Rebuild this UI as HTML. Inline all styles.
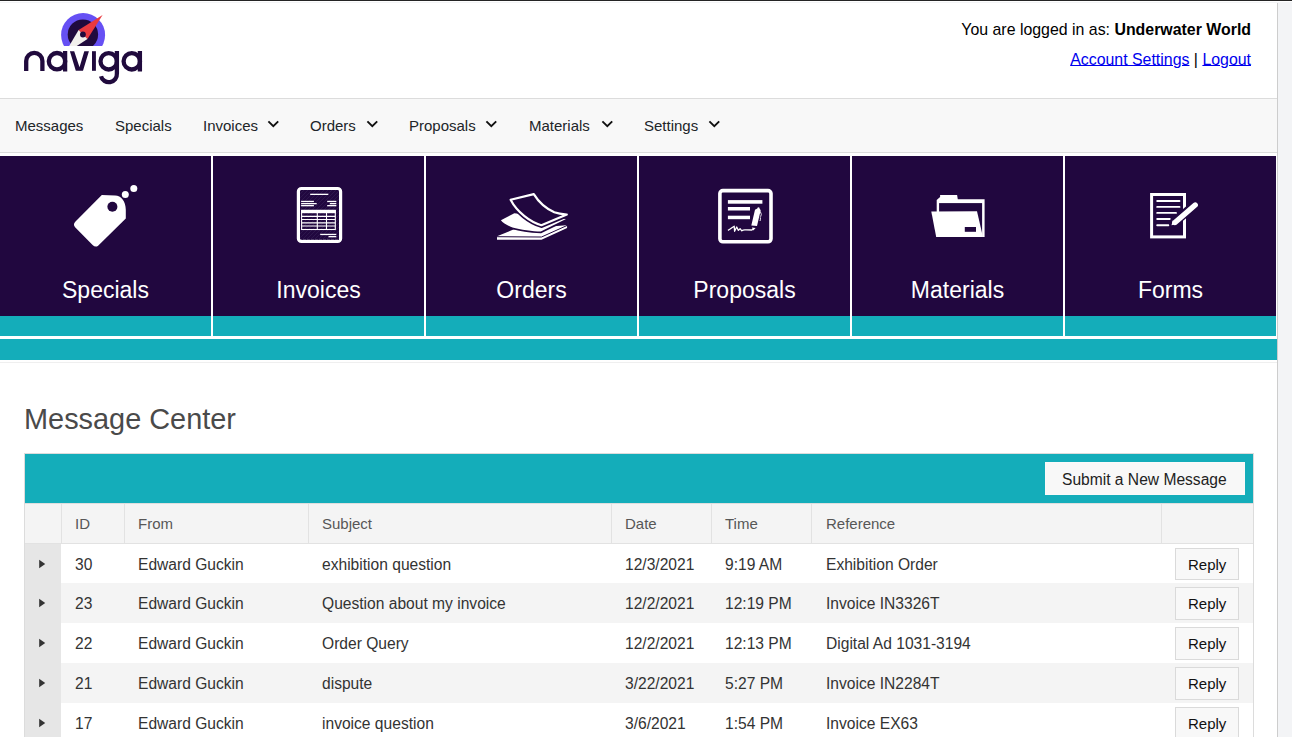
<!DOCTYPE html>
<html><head><meta charset="utf-8">
<style>
html,body{margin:0;padding:0;background:#fff;}
body{width:1292px;height:737px;overflow:hidden;position:relative;font-family:"Liberation Sans",sans-serif;}
.a{position:absolute;}
.t{position:absolute;white-space:nowrap;line-height:1;}
.topline{left:0;top:0;width:1292px;height:1px;background:#242424;}
.topline2{left:0;top:2px;width:1292px;height:1px;background:#f3f4f6;}
.sbborder{left:1277px;top:3px;width:1px;height:734px;background:#cdcdcd;}
.sb{left:1278px;top:3px;width:14px;height:734px;background:#f3f4f6;}
.nav{left:0;top:98px;width:1277px;height:53px;background:#f8f8f8;border-top:1px solid #dcdcdc;border-bottom:1px solid #dcdcdc;}
.nv{font-size:15px;color:#212529;top:118px;}
.chev{position:absolute;top:120px;width:11px;height:8px;overflow:visible}
.tile{top:156px;width:211px;height:160px;background:#21073f;}
.tteal{top:316px;width:211px;height:20px;background:#14adba;}
.tl{top:279px;font-size:23px;color:#fff;width:211px;text-align:center;}
.bar{left:0;top:339px;width:1277px;height:21px;background:#14adba;}
.hr{left:0;top:362px;width:1277px;height:1px;background:#efefef;}
.h1{left:24px;top:405px;font-size:28.9px;color:#4a4a4a;}
.grid{left:24px;top:453px;width:1228px;height:300px;border:1px solid #dcdcdc;border-bottom:none;}
.tool{left:25px;top:454px;width:1228px;height:49px;background:#14adba;}
.tbb{left:25px;top:503px;width:1228px;height:1px;background:#dedede;}
.hdr{left:25px;top:504px;width:1228px;height:39px;background:#f4f4f4;}
.vb{position:absolute;top:504px;width:1px;height:39px;background:#e2e2e2;}
.hb{left:25px;top:543px;width:1228px;height:1px;background:#e2e2e2;}
.ht{font-size:15px;color:#575757;top:516px;}
.row{position:absolute;left:25px;width:1228px;height:40px;}
.alt{background:#f4f4f4;}
.exp{position:absolute;left:25px;width:36px;background:#e6e6e6;}
.ct{font-size:15.6px;color:#333;}
.btn{position:absolute;background:#f8f8f8;border:1px solid #dadada;box-sizing:border-box;}
</style></head><body>
<div class="a topline"></div>
<div class="a topline2"></div>
<div class="a sb"></div>
<div class="a sbborder"></div>

<!-- LOGO -->
<svg class="a" style="left:0;top:0" width="160" height="95" viewBox="0 0 160 95">
  <defs><clipPath id="cut"><rect x="0" y="0" width="160" height="46"/></clipPath></defs>
  <g clip-path="url(#cut)">
    <circle cx="83.1" cy="35" r="22" fill="#6650f4"/>
    <circle cx="82.9" cy="34.6" r="15.2" fill="#200a3d"/>
    <polygon points="102.6,15.1 87.5,39.05 78.6,29.9" fill="#e9393f"/>
    <polygon points="78.6,29.9 87.5,39.05 76.6,46.1 69.1,46.1" fill="#f2f0ec"/>
    <circle cx="82.9" cy="34.5" r="2.9" fill="#200a3d"/>
  </g>
  <g fill="none" stroke="#200a3d" stroke-width="4.3">
    <path d="M26.2,71 V61 A8.1,8.1 0 0 1 42.4,61 V71"/>
    <circle cx="57" cy="61.2" r="8.2"/>
    <path d="M65.1,51 V71.5"/>
    <circle cx="108.7" cy="61.3" r="8.2"/>
    <path d="M116.9,51 V73.5 A8.1,8.1 0 0 1 101,76.2"/>
    <circle cx="131.8" cy="61.3" r="8.2"/>
    <path d="M139.9,51 V71.5"/>
  </g>
  <polygon fill="#200a3d" points="69.9,51.2 74.2,51.2 79.5,67.3 84.3,51.2 88.9,51.2 83,70.8 75.8,70.8"/>
  <rect x="92" y="51.2" width="3.9" height="19.6" fill="#200a3d"/>
</svg>

<!-- USER INFO -->
<div class="t" style="right:41px;top:22px;font-size:15.9px;color:#000;">You are logged in as: <b>Underwater World</b></div>
<div class="t" style="right:41px;top:52px;font-size:15.9px;color:#000;"><span style="color:#0000ee;text-decoration:underline;text-underline-offset:0px">Account Settings</span> | <span style="color:#0000ee;text-decoration:underline;text-underline-offset:0px">Logout</span></div>

<!-- NAV -->
<div class="a nav"></div>
<div class="t nv" style="left:15px">Messages</div>
<div class="t nv" style="left:115px">Specials</div>
<div class="t nv" style="left:203px">Invoices</div>
<div class="t nv" style="left:310px">Orders</div>
<div class="t nv" style="left:409px">Proposals</div>
<div class="t nv" style="left:529px">Materials</div>
<div class="t nv" style="left:644px">Settings</div>
<svg class="chev" style="left:268px" viewBox="0 0 11 8"><path d="M0.4,1.4 L5.3,6.2 L10.2,1.4" fill="none" stroke="#111" stroke-width="1.9"/></svg>
<svg class="chev" style="left:367px" viewBox="0 0 11 8"><path d="M0.4,1.4 L5.3,6.2 L10.2,1.4" fill="none" stroke="#111" stroke-width="1.9"/></svg>
<svg class="chev" style="left:486px" viewBox="0 0 11 8"><path d="M0.4,1.4 L5.3,6.2 L10.2,1.4" fill="none" stroke="#111" stroke-width="1.9"/></svg>
<svg class="chev" style="left:602px" viewBox="0 0 11 8"><path d="M0.4,1.4 L5.3,6.2 L10.2,1.4" fill="none" stroke="#111" stroke-width="1.9"/></svg>
<svg class="chev" style="left:709px" viewBox="0 0 11 8"><path d="M0.4,1.4 L5.3,6.2 L10.2,1.4" fill="none" stroke="#111" stroke-width="1.9"/></svg>

<!-- TILES -->
<div class="a tile" style="left:0"></div><div class="a tteal" style="left:0"></div>
<div class="a tile" style="left:213px"></div><div class="a tteal" style="left:213px"></div>
<div class="a tile" style="left:426px"></div><div class="a tteal" style="left:426px"></div>
<div class="a tile" style="left:639px"></div><div class="a tteal" style="left:639px"></div>
<div class="a tile" style="left:852px"></div><div class="a tteal" style="left:852px"></div>
<div class="a tile" style="left:1065px"></div><div class="a tteal" style="left:1065px"></div>
<div class="t tl" style="left:0">Specials</div>
<div class="t tl" style="left:213px">Invoices</div>
<div class="t tl" style="left:426px">Orders</div>
<div class="t tl" style="left:639px">Proposals</div>
<div class="t tl" style="left:852px">Materials</div>
<div class="t tl" style="left:1065px">Forms</div>
<div class="a bar"></div>
<div class="a hr"></div>

<!-- ICONS placeholder -->
<svg id="icons" class="a" style="left:0;top:0" width="1277" height="300" viewBox="0 0 1277 300">
 <!-- Specials: tag -->
 <g fill="#fff">
  <path d="M101.8,195.1 L115.2,195.4 C121,195.6 125.8,201 125.8,209.7 L125.8,218.4 L98.1,245.7 Q95.4,247.8 92.6,244.9 L75.1,227.2 Q72.6,224.4 75.5,221.5 Z"/>
  <circle cx="125.3" cy="194.5" r="3.5"/>
  <circle cx="133.8" cy="188.5" r="3.5"/>
 </g>
 <circle cx="112.4" cy="206.7" r="5" fill="#21073f"/>

 <!-- Invoices -->
 <rect x="298.4" y="188.5" width="42.2" height="52.9" rx="3" ry="3" fill="none" stroke="#fff" stroke-width="3.2"/>
 <defs><clipPath id="invclip"><rect x="300" y="190" width="39" height="50"/></clipPath></defs><g clip-path="url(#invclip)" stroke="#2f1a4e" stroke-width="0.9"><path d="M250,240 L300,190 M254,240 L304,190 M258,240 L308,190 M262,240 L312,190 M266,240 L316,190 M270,240 L320,190 M274,240 L324,190 M278,240 L328,190 M282,240 L332,190 M286,240 L336,190 M290,240 L340,190 M294,240 L344,190 M298,240 L348,190 M302,240 L352,190 M306,240 L356,190 M310,240 L360,190 M314,240 L364,190 M318,240 L368,190 M322,240 L372,190 M326,240 L376,190 M330,240 L380,190 M334,240 L384,190 M338,240 L388,190"/></g>
 <g fill="#fff">
  <rect x="310.2" y="193.7" width="18.1" height="1.3"/>
  <rect x="301.1" y="200.8" width="12.8" height="1.3"/>
  <rect x="301.1" y="203" width="15.6" height="1.3"/>
  <rect x="301.1" y="205" width="12.8" height="1.3"/>
  <rect x="327.2" y="200.8" width="9.1" height="1.3"/>
  <rect x="329.8" y="203" width="6.5" height="1.3"/>
  <rect x="327.2" y="205" width="9.1" height="1.3"/>
  <rect x="301.1" y="209.9" width="34.7" height="3.3"/>
  <rect x="320.2" y="233.8" width="16.1" height="1.3"/>
  <rect x="328.5" y="236" width="7.8" height="1.3"/>
 </g>
 <g fill="none" stroke="#fff" stroke-width="1.1">
  <rect x="301.6" y="210.4" width="33.7" height="19.1"/>
  <path d="M301.6,216.4 H335.3 M301.6,219.5 H335.3 M301.6,222.9 H335.3 M301.6,226 H335.3 M317.3,210.4 V229.5 M326.5,210.4 V229.5"/>
 </g>

 <!-- Orders: paper stack -->
 <path d="M497,236.2 L513.4,229.6 L566,225.2 Q568,226.6 566.6,228.2 L541.5,239.8 L497,239.8 Z" fill="#fff"/>
 <path d="M497,236.7 L541.5,237 L567,225.5" fill="none" stroke="#21073f" stroke-width="1"/>
 <path d="M500.9,220.2 L514.3,213.3 L566,219.1 L540.8,231.5 C533,231.2 520,229.8 512.5,227.4 C507,225.6 503,222.8 500.9,220.2 Z" fill="#fff" stroke="#21073f" stroke-width="3.6" paint-order="stroke" stroke-linejoin="round"/>
 <path d="M510.6,199.8 L533.8,194.1 C538,201 545,208 554.3,212.3 C559,214 563,214.3 566.8,214.6 L541.4,225.2 C530,222 517,212 510.6,199.8 Z" fill="#21073f" stroke="#21073f" stroke-width="5.5" stroke-linejoin="round"/>
 <path d="M510.6,199.8 L533.8,194.1 C538,201 545,208 554.3,212.3 C559,214 563,214.3 566.8,214.6 L541.4,225.2 C530,222 517,212 510.6,199.8 Z" fill="none" stroke="#fff" stroke-width="2.2" stroke-linejoin="round"/>

 <!-- Proposals -->
 <rect x="719.9" y="190.6" width="51.1" height="51.2" rx="3" ry="3" fill="none" stroke="#fff" stroke-width="3.6"/>
 <g fill="#fff">
  <rect x="727.9" y="200.1" width="34.5" height="3.6"/>
  <rect x="727.9" y="207" width="22.1" height="3.5"/>
  <rect x="727.9" y="215.7" width="22.1" height="3.5"/>
 </g>
 <path d="M751.3,225.4 L755,209.8 L757.3,208.6 L757.9,207.2 L759.3,207.4 L759.7,208.8 L760.7,210.3 L757,225.9 Z" fill="#fff"/>
 <path d="M760.3,211.5 Q762.2,214.5 760.6,216.8 M760.3,217.3 Q760.8,219.5 760,221" fill="none" stroke="#fff" stroke-width="0.9"/>
 <path d="M751.9,227.6 L755.6,228.1 L753.3,230.5 Z" fill="#fff"/>
 <path d="M727.9,230.4 C730,229.5 732,227.5 734.2,226.2 L734.6,231.3 L736.7,227 L738.4,230.4 L740.1,228.7 L741.8,230.8 C743,229.8 744,229.6 746,229.9 L751.8,230 L753.5,229.2" fill="none" stroke="#fff" stroke-width="1.3" stroke-linejoin="round"/>

 <!-- Materials: folder -->
 <path d="M940.1,195.1 L957.1,195.1 L957.8,199.2 L984.6,199.2 L984.6,237.1 L936.7,237.1 L936.7,199.9 L940.1,197 Z" fill="#fff"/>
 <rect x="939.1" y="203.1" width="43" height="34" fill="#21073f"/>
 <path d="M931.3,211.5 L977,211.3 L982.6,235.4 L982.6,237.1 L936.2,237.1 Z" fill="#fff"/>
 <rect x="964.8" y="227" width="11.2" height="4.8" fill="#21073f"/>

 <!-- Forms -->
 <rect x="1151.6" y="194.5" width="32.9" height="42.4" fill="none" stroke="#fff" stroke-width="3"/>
 <g stroke="#fff" stroke-width="1.9" stroke-linecap="round">
  <path d="M1157.2,201 H1179.5 M1157.2,206.9 H1179.5 M1157.2,212.9 H1176 M1157.2,219 H1169.8 M1157.2,225.2 H1168.4"/>
 </g>
 <path d="M1173.5,223.2 L1195,204.6" stroke="#21073f" stroke-width="9" stroke-linecap="round"/>
 <path d="M1175,222.5 L1195.2,205" stroke="#fff" stroke-width="5.4" stroke-linecap="round"/>
 <path d="M1171.5,225.3 L1172.8,220.2 L1177,224 Z" fill="#fff"/>
</svg>

<!-- MESSAGE CENTER -->
<div class="t h1">Message Center</div>
<div class="a grid"></div>
<div class="a tool"></div>
<div class="btn" style="left:1045px;top:462px;width:200px;height:33px;border-color:#fafafa;background:#f8f8f8"></div>
<div class="t" style="left:1062px;top:472px;font-size:15.6px;color:#222;">Submit a New Message</div>
<div class="a tbb"></div>
<div class="a hdr"></div>
<div class="vb" style="left:61px"></div>
<div class="vb" style="left:124px"></div>
<div class="vb" style="left:308px"></div>
<div class="vb" style="left:611px"></div>
<div class="vb" style="left:711px"></div>
<div class="vb" style="left:811px"></div>
<div class="vb" style="left:1161px"></div>
<div class="t ht" style="left:75px">ID</div>
<div class="t ht" style="left:138px">From</div>
<div class="t ht" style="left:322px">Subject</div>
<div class="t ht" style="left:625px">Date</div>
<div class="t ht" style="left:725px">Time</div>
<div class="t ht" style="left:826px">Reference</div>
<div class="a hb"></div>

<div id="rows">
<div class="row" style="top:544px;height:39px"></div>
<div class="exp" style="top:544px;height:39px"></div>
<svg class="a" style="left:38px;top:559px" width="9" height="10" viewBox="0 0 9 10"><path d="M1.2,0.8 L7.2,5 L1.2,9.2 Z" fill="#333"/></svg>
<div class="t ct" style="left:75px;top:557px">30</div>
<div class="t ct" style="left:138px;top:557px">Edward Guckin</div>
<div class="t ct" style="left:322px;top:557px">exhibition question</div>
<div class="t ct" style="left:625px;top:557px">12/3/2021</div>
<div class="t ct" style="left:725px;top:557px">9:19 AM</div>
<div class="t ct" style="left:826px;top:557px">Exhibition Order</div>
<div class="btn" style="left:1175px;top:548px;width:64px;height:32px"></div>
<div class="t" style="left:1188px;top:557px;font-size:15px;color:#111">Reply</div>
<div class="row alt" style="top:583px;height:40px"></div>
<div class="exp" style="top:583px;height:40px"></div>
<svg class="a" style="left:38px;top:598px" width="9" height="10" viewBox="0 0 9 10"><path d="M1.2,0.8 L7.2,5 L1.2,9.2 Z" fill="#333"/></svg>
<div class="t ct" style="left:75px;top:596px">23</div>
<div class="t ct" style="left:138px;top:596px">Edward Guckin</div>
<div class="t ct" style="left:322px;top:596px">Question about my invoice</div>
<div class="t ct" style="left:625px;top:596px">12/2/2021</div>
<div class="t ct" style="left:725px;top:596px">12:19 PM</div>
<div class="t ct" style="left:826px;top:596px">Invoice IN3326T</div>
<div class="btn" style="left:1175px;top:587px;width:64px;height:33px"></div>
<div class="t" style="left:1188px;top:596px;font-size:15px;color:#111">Reply</div>
<div class="row" style="top:623px;height:40px"></div>
<div class="exp" style="top:623px;height:40px"></div>
<svg class="a" style="left:38px;top:638px" width="9" height="10" viewBox="0 0 9 10"><path d="M1.2,0.8 L7.2,5 L1.2,9.2 Z" fill="#333"/></svg>
<div class="t ct" style="left:75px;top:636px">22</div>
<div class="t ct" style="left:138px;top:636px">Edward Guckin</div>
<div class="t ct" style="left:322px;top:636px">Order Query</div>
<div class="t ct" style="left:625px;top:636px">12/2/2021</div>
<div class="t ct" style="left:725px;top:636px">12:13 PM</div>
<div class="t ct" style="left:826px;top:636px">Digital Ad 1031-3194</div>
<div class="btn" style="left:1175px;top:627px;width:64px;height:33px"></div>
<div class="t" style="left:1188px;top:636px;font-size:15px;color:#111">Reply</div>
<div class="row alt" style="top:663px;height:40px"></div>
<div class="exp" style="top:663px;height:40px"></div>
<svg class="a" style="left:38px;top:678px" width="9" height="10" viewBox="0 0 9 10"><path d="M1.2,0.8 L7.2,5 L1.2,9.2 Z" fill="#333"/></svg>
<div class="t ct" style="left:75px;top:676px">21</div>
<div class="t ct" style="left:138px;top:676px">Edward Guckin</div>
<div class="t ct" style="left:322px;top:676px">dispute</div>
<div class="t ct" style="left:625px;top:676px">3/22/2021</div>
<div class="t ct" style="left:725px;top:676px">5:27 PM</div>
<div class="t ct" style="left:826px;top:676px">Invoice IN2284T</div>
<div class="btn" style="left:1175px;top:667px;width:64px;height:33px"></div>
<div class="t" style="left:1188px;top:676px;font-size:15px;color:#111">Reply</div>
<div class="row" style="top:703px;height:40px"></div>
<div class="exp" style="top:703px;height:40px"></div>
<svg class="a" style="left:38px;top:718px" width="9" height="10" viewBox="0 0 9 10"><path d="M1.2,0.8 L7.2,5 L1.2,9.2 Z" fill="#333"/></svg>
<div class="t ct" style="left:75px;top:716px">17</div>
<div class="t ct" style="left:138px;top:716px">Edward Guckin</div>
<div class="t ct" style="left:322px;top:716px">invoice question</div>
<div class="t ct" style="left:625px;top:716px">3/6/2021</div>
<div class="t ct" style="left:725px;top:716px">1:54 PM</div>
<div class="t ct" style="left:826px;top:716px">Invoice EX63</div>
<div class="btn" style="left:1175px;top:707px;width:64px;height:33px"></div>
<div class="t" style="left:1188px;top:716px;font-size:15px;color:#111">Reply</div>
</div>
</body></html>
